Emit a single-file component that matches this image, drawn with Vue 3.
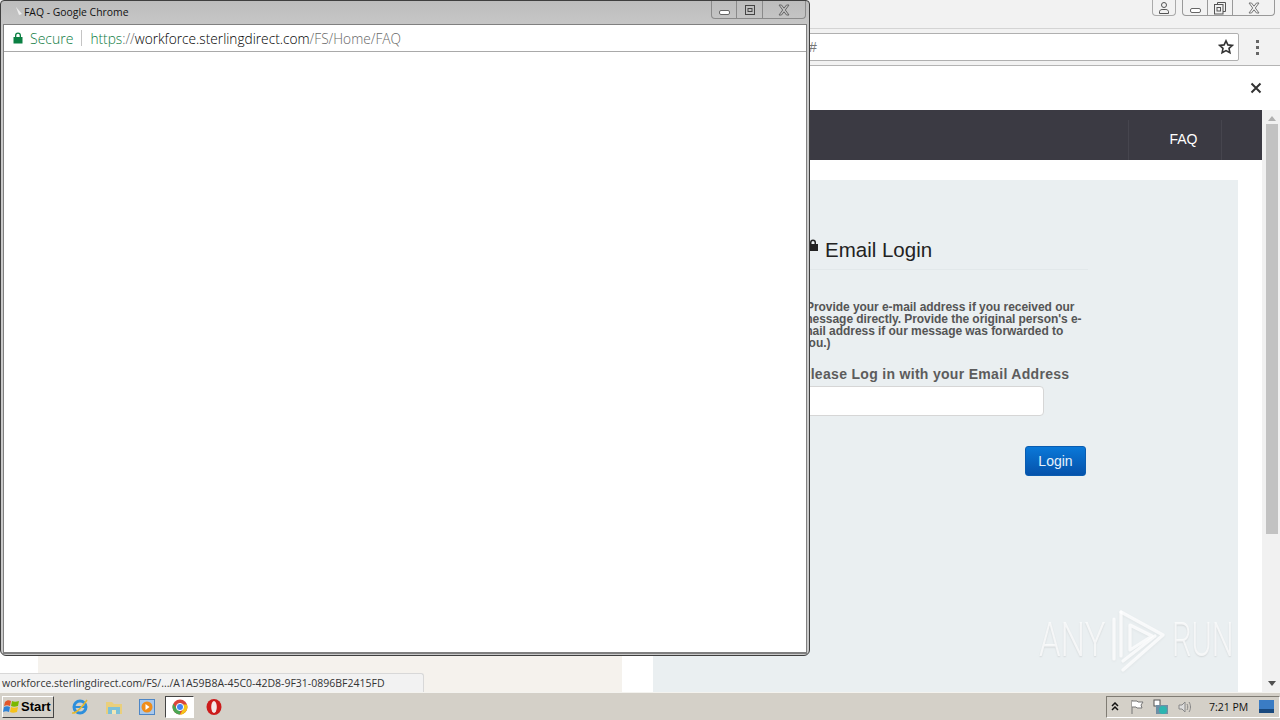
<template>
  <div class="desktop">
    <div class="main-window">
      <div class="tabstrip">
        <div class="caption-btn profile">
          <svg width="14" height="14" viewBox="0 0 14 14" fill="none" stroke="#555" stroke-width="1"><circle cx="7" cy="4" r="2.500"/><path d="M2.500 12.500v-1.800c0-1.200 1.200-2.200 2.600-2.200h3.800c1.400 0 2.600 1 2.600 2.200v1.800z"/></svg>
        </div>
        <div class="caption-group">
          <div class="cap cap-min"><span class="min-bar"></span></div>
          <div class="cap cap-max">
            <svg width="14" height="14" viewBox="0 0 14 14" fill="none" stroke="#555"><path d="M4.500 3.500v-2h8v9h-2.500"/><rect x="1.500" y="3.500" width="8.500" height="9.500"/><rect x="4" y="6.500" width="3.500" height="3.500"/></svg>
          </div>
          <div class="cap cap-close">
            <svg width="14" height="12" viewBox="0 0 14 12" fill="none" stroke="#777"><path d="M2 1h2.500L7 4.200 9.500 1H12L8.300 6 12 11H9.500L7 7.800 4.500 11H2l3.700-5z"/></svg>
          </div>
        </div>
      </div>
      <div class="toolbar">
        <div class="omnibox">
          <span class="hash">#</span>
          <svg class="star" width="16" height="16" viewBox="0 0 16 16" fill="none" stroke="#333" stroke-width="1.600"><path d="M8 1.800l1.900 4.100 4.400.5-3.300 3 .9 4.400L8 11.600l-3.900 2.200.9-4.400-3.300-3 4.400-.5z"/></svg>
        </div>
        <div class="menu-dots"><i></i><i></i><i></i></div>
      </div>
      <div class="infobar">
        <svg width="12" height="12" viewBox="0 0 12 12" stroke="#333" stroke-width="2"><path d="M1.500 1.500l9 9M10.500 1.500l-9 9"/></svg>
      </div>
      <div class="viewport">
        <div class="page">
          <div class="topnav">
            <div class="nav-item">FAQ</div>
          </div>
          <div class="columns">
            <div class="col-left"></div>
            <div class="col-right">
              <h2 class="login-title">
                <svg class="lock" width="10" height="12" viewBox="0 0 10 12"><path fill="#222" d="M1 5V3.500a3 3 0 0 1 6 0V5h2v7H0V5zm1.500 0h3V3.500a1.500 1.500 0 0 0-3 0z"/></svg>
                Email Login
              </h2>
              <p class="hint">(Provide your e-mail address if you received our message directly. Provide the original person's e-mail address if our message was forwarded to you.)</p>
              <label class="field-label">Please Log in with your Email Address</label>
              <div class="field"></div>
              <div class="actions"><button class="login-btn">Login</button></div>
            </div>
          </div>
        </div>
        <div class="scrollbar">
          <span class="arrow up"></span>
          <div class="track"><div class="thumb"></div></div>
          <span class="arrow down"></span>
        </div>
      </div>
    </div>

    <div class="watermark">
      <span class="wm-text"><b>ANY</b></span>
      <svg class="wm-icon" width="72" height="72" viewBox="0 0 72 72" fill="none" stroke="#fff" stroke-opacity=".75" stroke-width="3.200" stroke-linejoin="round" stroke-linecap="round"><path d="M14 15v40"/><path d="M21 8l42 23-40 35"/><path d="M21 8v44"/><path d="M30 21l22 11-22 14z"/><path d="M23 57l32-25"/></svg>
      <span class="wm-text wm-run"><b>RUN</b></span>
    </div>

    <div class="status-bubble">workforce.sterlingdirect.com/FS/.../A1A59B8A-45C0-42D8-9F31-0896BF2415FD</div>

    <div class="popup">
      <div class="popup-title">
        <svg class="page-icon" width="8" height="10" viewBox="0 0 8 10"><path d="M1 0l6 7-3 1z" fill="#eee"/></svg>
        <span class="popup-caption">FAQ - Google Chrome</span>
        <div class="caption-group small">
          <div class="cap cap-min"><span class="min-bar"></span></div>
          <div class="cap cap-max">
            <svg width="14" height="12" viewBox="0 0 14 12" fill="none" stroke="#444"><rect x="2.500" y="1.500" width="9" height="9"/><rect x="5" y="4.500" width="4" height="3"/></svg>
          </div>
          <div class="cap cap-close">
            <svg width="14" height="12" viewBox="0 0 14 12" fill="none" stroke="#666"><path d="M2 1h2.500L7 4.200 9.500 1H12L8.300 6 12 11H9.500L7 7.800 4.500 11H2l3.700-5z"/></svg>
          </div>
        </div>
      </div>
      <div class="popup-inner">
        <div class="urlbar">
          <svg width="10" height="12" viewBox="0 0 10 12"><path fill="#0b8043" d="M2 5V3.500a3 3 0 0 1 6 0V5h1.500v6.500h-9V5zm1.300 0h3.400V3.500a1.700 1.700 0 0 0-3.400 0z"/></svg>
          <span class="secure">Secure</span>
          <span class="url-sep"></span>
          <span class="url"><span class="scheme">https</span><span class="faint">://</span>workforce.sterlingdirect.com<span class="faint">/FS/Home/FAQ</span></span>
        </div>
        <div class="popup-body"></div>
      </div>
    </div>

    <div class="taskbar">
      <button class="start">
        <svg width="18" height="16" viewBox="0 0 18 16"><path fill="#e2572b" d="M2 3c2-2 4-2 6-1l-1 5c-2-1-4-1-6 0z"/><path fill="#7ab800" d="M9 2c2 1 4 1 7 0l-1 5c-3 1-5 1-7 0z"/><path fill="#2e82d6" d="M1 8c2-1 4-1 6 0l-1 5c-2-1-4-1-6 0z"/><path fill="#f7c21a" d="M8 8c2 1 4 1 7 0l-1 5c-3 1-5 1-7 0z"/></svg>
        Start
      </button>
      <div class="quick">
        <svg class="q" width="18" height="18" viewBox="0 0 18 18" fill="none"><circle cx="9" cy="9" r="6" stroke="#2d8fdc" stroke-width="3"/><path d="M4 9h10" stroke="#2d8fdc" stroke-width="2"/><path d="M1 15c4 1 11-7 15-13" stroke="#e5b82c" stroke-width="1.500"/></svg>
        <svg class="q" width="18" height="16" viewBox="0 0 18 16"><path fill="#e9cf7c" d="M1 3h6l2 2h8v10H1z"/><path fill="#7cc0d8" d="M3 8h12v7H3z"/><path fill="#f1e7b7" d="M7 11h4v4H7z"/></svg>
        <svg class="q" width="16" height="16" viewBox="0 0 16 16"><rect x=".5" y=".5" width="15" height="15" fill="#a8c8ec" stroke="#4d86c6"/><circle cx="8" cy="8" r="5.500" fill="#ef8d1a"/><path fill="#fff" d="M6.500 5l4 3-4 3z"/></svg>
        <div class="task-active">
          <svg width="16" height="16" viewBox="0 0 16 16"><circle cx="8" cy="8" r="7.500" fill="#d9453b"/><path fill="#4aa753" d="M8 15.500A7.500 7.500 0 0 1 1.200 4.800L5 10l3 2z"/><path fill="#f5c518" d="M15 5.500a7.500 7.500 0 0 1-7 10l3-5V5.500z"/><circle cx="8" cy="8" r="3.600" fill="#4285f4" stroke="#fff"/></svg>
        </div>
        <svg class="q opera" width="16" height="18" viewBox="0 0 16 18"><ellipse cx="8" cy="9" rx="7.500" ry="8" fill="#cc1b1b"/><ellipse cx="8" cy="9" rx="2.800" ry="6" fill="#f4e8e8"/></svg>
      </div>
      <div class="tray">
        <svg width="8" height="9" viewBox="0 0 8 9" fill="none" stroke="#111" stroke-width="1.500"><path d="M1 4l3-3 3 3M1 8l3-3 3 3"/></svg>
        <svg class="t1" width="16" height="16" viewBox="0 0 16 16" fill="none" stroke="#777"><path d="M3 1v14"/><path d="M3 2h5l1 1h5l-2 3 1 3H8L7 8H3" fill="#fff"/></svg>
        <svg class="t2" width="16" height="16" viewBox="0 0 16 16"><rect x="1" y="1" width="6" height="6" fill="#fff" stroke="#555"/><rect x="3" y="6" width="12" height="9" fill="#6e8fa5"/><circle cx="10" cy="11" r="4" fill="#2cb5b0"/></svg>
        <svg class="t3" width="16" height="16" viewBox="0 0 16 16" fill="none" stroke="#888"><path d="M2 6h3l3-3v10l-3-3H2z" fill="#ddd"/><path d="M10 5c1 2 1 4 0 6M12 3c2 3 2 7 0 10"/></svg>
        <span class="clock">7:21 PM</span>
        <svg class="desk" width="15" height="13" viewBox="0 0 15 13"><rect width="15" height="13" fill="#3a7cc4"/><rect y="9" width="15" height="4" fill="#19497e"/></svg>
      </div>
    </div>
  </div>
</template>

<script setup>
</script>

<style>
html, body {
  margin: 0;
  overflow: hidden;
}
</style>

<style scoped>
.desktop {
  position: relative;
  width: 1280px;
  height: 720px;
  overflow: hidden;
  font-family: "Liberation Sans", Arial, sans-serif;
  display: flex;
  flex-direction: column;
}

/* background chrome window */
.main-window {
  height: 692px;
  display: flex;
  flex-direction: column;
  background: #fff;
}

.tabstrip {
  height: 29px;
  background: #f2f2f2;
  border-bottom: 1px solid #d4d4d4;
  box-sizing: border-box;
  display: flex;
  justify-content: flex-end;
  gap: 6px;
  padding-right: 5px;
  flex: none;
}

.caption-btn.profile {
  width: 24px;
  height: 16px;
  box-sizing: border-box;
  border: 1px solid #aaa;
  border-top: none;
  border-radius: 0 0 4px 4px;
  display: flex;
  align-items: center;
  justify-content: center;
}

.caption-group {
  display: flex;
  height: 16px;
  box-sizing: border-box;
  border: 1px solid #999;
  border-top: none;
  border-radius: 0 0 4px 4px;
}

.cap {
  display: flex;
  align-items: center;
  justify-content: center;
  border-left: 1px solid #999;
  width: 24px;
}

.cap-min {
  border-left: none;
}

.cap-close {
  width: 41px;
}

.min-bar {
  width: 9px;
  height: 3px;
  border: 1px solid #666;
  border-radius: 2px;
  margin-top: 5px;
  background: #fff;
}

.toolbar {
  height: 37px;
  background: #f2f2f2;
  border-bottom: 1px solid #b4b4b4;
  box-sizing: border-box;
  display: flex;
  align-items: center;
  flex: none;
}

.omnibox {
  width: 1239px;
  height: 28px;
  background: #fff;
  border: 1px solid #b0b0b0;
  border-radius: 2px;
  box-sizing: border-box;
  display: flex;
  align-items: center;
  justify-content: space-between;
  padding: 0 4px 0 808px;
  font-size: 14px;
  color: #777;
}

.menu-dots {
  display: flex;
  flex-direction: column;
  gap: 3px;
  margin-left: 17px;
}

.menu-dots i {
  width: 3px;
  height: 3px;
  background: #666;
}

.infobar {
  height: 44px;
  background: #fff;
  display: flex;
  align-items: center;
  justify-content: flex-end;
  padding-right: 18px;
  flex: none;
}

.viewport {
  flex: 1;
  display: flex;
  min-height: 0;
}

.page {
  flex: 1;
  display: flex;
  flex-direction: column;
  min-width: 0;
}

.topnav {
  height: 50px;
  background: #3b3a43;
  display: flex;
  justify-content: flex-end;
  padding: 0 40px 0 0;
  flex: none;
}

.nav-item {
  width: 94px;
  margin-top: 10px;
  height: 40px;
  border-left: 1px solid #46454e;
  border-right: 1px solid #46454e;
  color: #fff;
  font-size: 14px;
  display: flex;
  align-items: center;
  justify-content: center;
  padding: 0 0 2px 17px;
  box-sizing: border-box;
}

.columns {
  flex: 1;
  display: flex;
  padding: 20px 24px 0 38px;
  gap: 31px;
  min-height: 0;
}

.col-left {
  width: 584px;
  background: #f5f2ed;
}

.col-right {
  flex: 1;
  background: #eaeff1;
  padding: 0 0 0 147px;
}

.login-title {
  margin: 0;
  width: 288px;
  height: 90px;
  box-sizing: border-box;
  padding: 58px 0 0 9px;
  border-bottom: 1px solid #e2e8ea;
  font-size: 20.500px;
  line-height: 24px;
  font-weight: 400;
  color: #222;
  display: flex;
  align-items: flex-start;
  gap: 6px;
}

.lock {
  margin-top: 1px;
  flex: none;
}

.hint {
  margin: 31px 0 0 2px;
  width: 284px;
  font-size: 12px;
  line-height: 12px;
  font-weight: 700;
  letter-spacing: -.05px;
  color: #555;
}

.field-label {
  display: block;
  margin: 17px 0 0 1px;
  font-size: 14px;
  line-height: 16px;
  font-weight: 700;
  letter-spacing: .31px;
  color: #5c5c5c;
}

.field {
  margin-top: 4px;
  width: 244px;
  height: 30px;
  box-sizing: border-box;
  background: #fff;
  border: 1px solid #d6d6d6;
  border-radius: 4px;
}

.actions {
  width: 286px;
  margin-top: 30px;
  display: flex;
  justify-content: flex-end;
}

.login-btn {
  width: 61px;
  height: 30px;
  border: 1px solid #0a5cb0;
  border-radius: 3px;
  background: linear-gradient(#0a78d8, #0552ab);
  color: #e8f2fb;
  font-family: inherit;
  font-size: 14px;
  padding: 0;
}

.scrollbar {
  width: 18px;
  display: flex;
  flex-direction: column;
  align-items: center;
  background: #f1f1f1;
  flex: none;
}

.track {
  flex: 1;
  width: 100%;
  padding: 0 2px 0 4px;
  box-sizing: border-box;
}

.thumb {
  height: 410px;
  background: #c2c2c2;
}

.arrow {
  width: 0;
  height: 0;
  border-left: 4px solid transparent;
  border-right: 4px solid transparent;
  flex: none;
  margin-left: 2px;
}

.arrow.up {
  margin-top: 6px;
  margin-bottom: 3px;
  border-bottom: 5px solid #b0b0b0;
}

.arrow.down {
  margin-top: 3px;
  margin-bottom: 6px;
  border-top: 5px solid #505050;
}

/* watermark over the page */
.watermark {
  position: absolute;
  left: 1039px;
  top: 604px;
  display: flex;
  align-items: center;
  height: 72px;
}

.wm-text {
  width: 61px;
  height: 72px;
  display: flex;
  align-items: center;
}

.wm-text b {
  flex: none;
  font-family: Roboto, sans-serif;
  font-weight: 300;
  font-size: 48px;
  line-height: 72px;
  white-space: nowrap;
  color: rgba(255, 255, 255, .72);
  text-shadow: 0 1px 2px rgba(0, 0, 0, .1);
  transform: scaleX(.72);
  transform-origin: left center;
}

.wm-run b {
  transform: scaleX(.64);
}

.wm-icon {
  filter: drop-shadow(0 1px 1px rgba(0, 0, 0, .06));
}

.status-bubble {
  position: absolute;
  left: 0;
  top: 673px;
  width: 424px;
  height: 19px;
  box-sizing: border-box;
  background: #f2f2f2;
  border: 1px solid #d8d8d8;
  border-left: none;
  border-bottom: none;
  border-radius: 0 3px 0 0;
  padding-left: 2px;
  font-family: "Open Sans", sans-serif;
  font-size: 10.500px;
  line-height: 18px;
  color: #333;
  white-space: nowrap;
}

/* FAQ popup window */
.popup {
  position: absolute;
  left: 0;
  top: 0;
  width: 810px;
  height: 656px;
  box-sizing: border-box;
  background: linear-gradient(#bdbdbd, #c9c9c9 30px);
  border: 1px solid #3f3f3f;
  border-radius: 4px 4px 6px 6px;
  display: flex;
  flex-direction: column;
  padding: 0 1px 1px 1px;
}

.popup-title {
  height: 23px;
  display: flex;
  align-items: flex-start;
  flex: none;
}

.page-icon {
  margin: 6px 0 0 13px;
}

.popup-caption {
  margin: 4px 0 0 1px;
  font-family: "Open Sans", sans-serif;
  font-size: 10.400px;
  line-height: 15px;
  color: #111;
  flex: 1;
}

.caption-group.small {
  height: 18px;
  margin-right: 2px;
  border-color: #8a8a8a;
}

.caption-group.small .cap {
  width: 25px;
  border-color: #8a8a8a;
}

.caption-group.small .cap-min {
  width: 24px;
}

.caption-group.small .cap-close {
  width: 42px;
}

.popup-inner {
  flex: 1;
  margin: 0 1px;
  background: #fff;
  border: 1px solid #808080;
  border-bottom-width: 2px;
  display: flex;
  flex-direction: column;
  min-height: 0;
}

.urlbar {
  height: 27px;
  box-sizing: border-box;
  border-bottom: 1px solid #a9a9a9;
  display: flex;
  align-items: center;
  padding-left: 9px;
  flex: none;
  font-family: "Open Sans", sans-serif;
  font-size: 14px;
  font-weight: 300;
}

.secure {
  margin-left: 7px;
  color: #0b7a3e;
}

.url-sep {
  width: 1px;
  height: 16px;
  background: #c4c4c4;
  margin: 0 8px;
}

.url {
  color: #000;
  font-size: 13.700px;
}

.scheme {
  color: #0b7a3e;
}

.faint {
  color: #666;
}

.popup-body {
  flex: 1;
}

/* taskbar */
.taskbar {
  height: 28px;
  background: #d4d0c8;
  border-top: 1px solid #f4f3ef;
  box-sizing: border-box;
  display: flex;
  align-items: center;
  flex: none;
}

.start {
  width: 52px;
  height: 22px;
  margin-left: 2px;
  box-sizing: border-box;
  padding: 0;
  display: flex;
  align-items: center;
  gap: 0;
  background: #d4d0c8;
  border: 1px solid;
  border-color: #fff #444 #444 #fff;
  font-family: "Liberation Sans", sans-serif;
  font-size: 13px;
  font-weight: 700;
  color: #000;
}

.quick {
  display: flex;
  align-items: center;
  margin-left: 17px;
}

.q {
  margin-right: 16px;
}

.task-active {
  width: 29px;
  height: 22px;
  box-sizing: border-box;
  margin: 0 12px 0 -6px;
  background: #fff;
  border: 1px solid;
  border-color: #444 #fff #fff #444;
  display: flex;
  align-items: center;
  justify-content: center;
}

.tray {
  margin-left: auto;
  height: 22px;
  width: 174px;
  box-sizing: border-box;
  border: 1px solid;
  border-color: #807c74 #fff #fff #807c74;
  display: flex;
  align-items: center;
  padding-left: 4px;
}

.t1 {
  margin-left: 10px;
}

.t2 {
  margin-left: 8px;
}

.t3 {
  margin-left: 8px;
}

.clock {
  margin-left: 16px;
  font-family: "Open Sans", sans-serif;
  font-size: 10.500px;
  color: #111;
}

.desk {
  margin-left: 11px;
}
</style>
